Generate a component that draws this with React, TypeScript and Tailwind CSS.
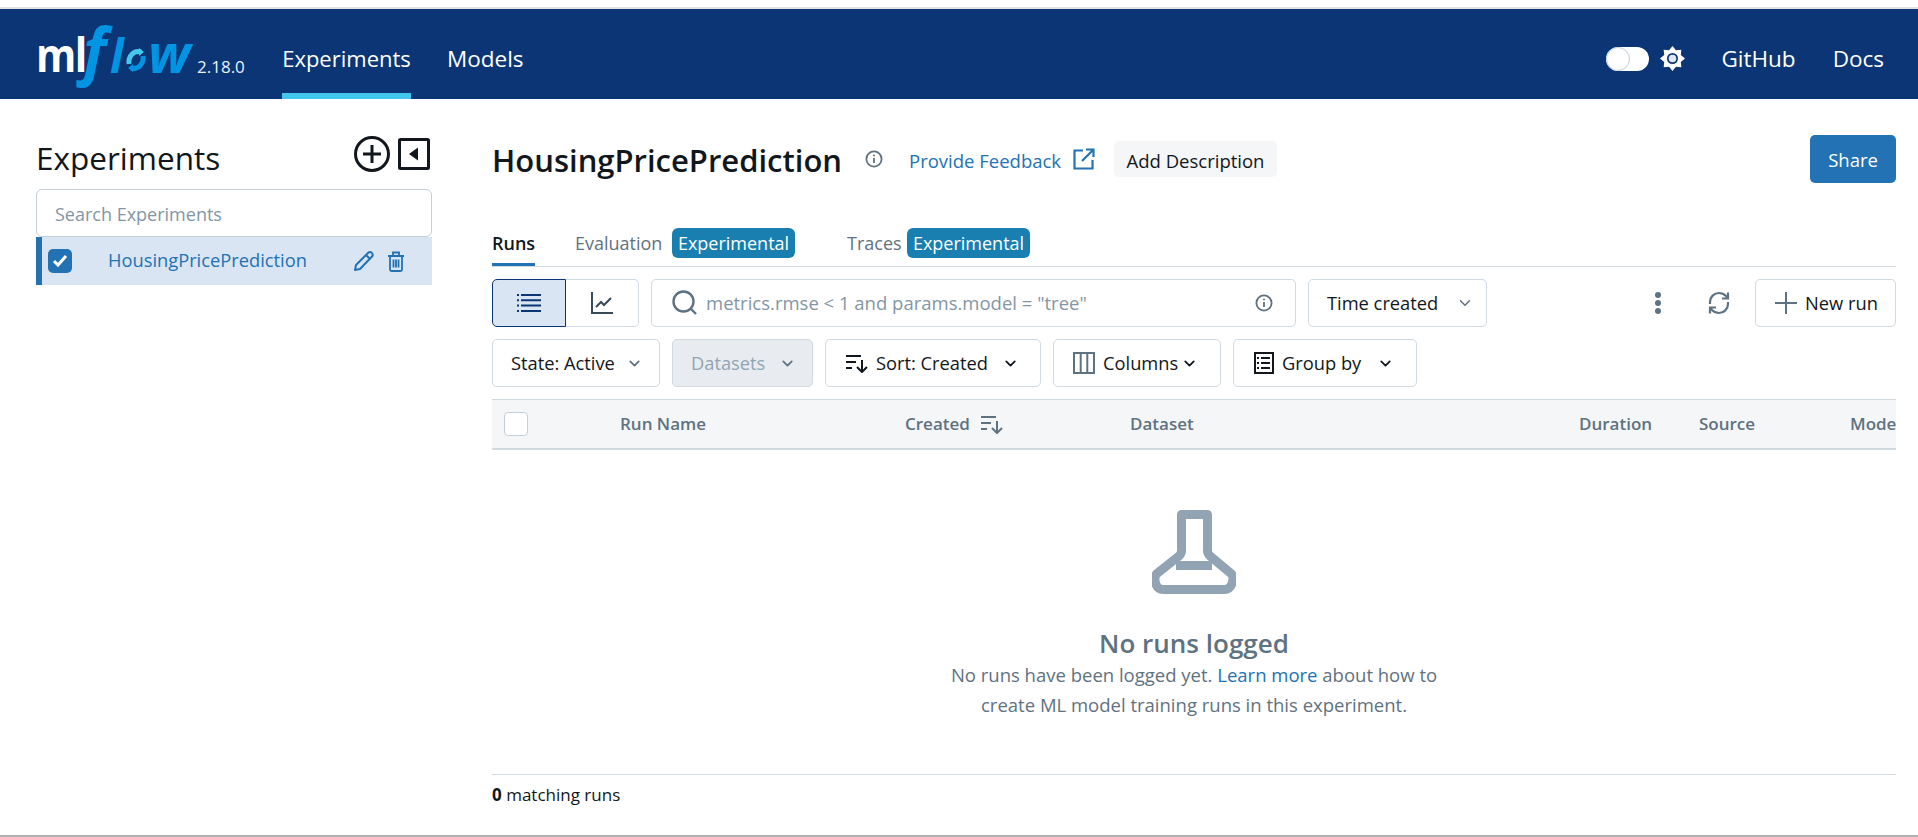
import React from "react";
import { ChevronDown } from "lucide-react";

const font = "[font-family:'Open_Sans','Noto_Sans',sans-serif]";

// 8 point star for the light theme icon
const starPoints = Array.from({ length: 16 }, (_, i) => {
  const r = i % 2 === 0 ? 12.5 : 9;
  const a = (i * Math.PI) / 8 - Math.PI / 2;
  return `${(12.5 + r * Math.cos(a)).toFixed(2)},${(12.5 + r * Math.sin(a)).toFixed(2)}`;
}).join(" ");

function Logo() {
  return (
    <div className="flex items-baseline w-[246px] h-[72px] leading-none [font-family:'Open_Sans',sans-serif]">
      <span className="inline-block text-[41px] font-bold text-white tracking-[-1.5px] origin-bottom scale-y-[1.15] w-[47px]">ml</span>
      <span className="text-[62px] italic font-bold text-[#0194e2] w-[27px]">f</span>
      <span className="text-[46px] italic font-bold text-[#0194e2] w-[14px]">l</span>
      <svg className="mx-[1px]" width="22" height="26" viewBox="0 0 22 26" fill="none" strokeWidth="5">
        <path d="M4 17C3 9 9 3 16 5" stroke="#43c9ed" />
        <path d="M18 9c1 8-5 14-12 12" stroke="#0194e2" />
        <path d="M14 1l5 4-5 4z" fill="#43c9ed" />
        <path d="M8 17l-5 4 5 4z" fill="#0194e2" />
      </svg>
      <span className="text-[54px] italic font-bold text-[#0194e2] tracking-[-1px] w-[49px]">w</span>
      <span className="text-[17px] text-[#e8f1fa] font-normal">2.18.0</span>
    </div>
  );
}

function Sun() {
  return (
    <svg width="25" height="25" viewBox="0 0 25 25">
      <polygon points={starPoints} fill="#fff" />
      <circle cx="12.5" cy="12.5" r="5.5" fill="#0b3574" />
      <circle cx="12.5" cy="12.5" r="3.8" fill="#dfe8f2" />
    </svg>
  );
}

function Flask() {
  return (
    <svg width="84" height="84" viewBox="0 0 84 84" fill="none" stroke="#92a4b4" strokeWidth="9" strokeLinejoin="round">
      <path d="M29.5 4.500h26V41c0 2 1 3.500 2.500 5l21 17.500c4 4 1.500 16-6.500 16H11c-8 0-10-12-6-16L27 46c1.500-1.500 2.500-3 2.500-5z" />
      <path d="M24 55.500h36" />
    </svg>
  );
}

function Info({ size = 18 }: { size?: number }) {
  return (
    <svg width={size} height={size} viewBox="0 0 18 18" fill="none" stroke="#5f7281" strokeWidth="1.800">
      <circle cx="9" cy="9" r="7.600" />
      <path d="M9 8v5" />
      <circle cx="9" cy="5.400" r="1" fill="#5f7281" stroke="none" />
    </svg>
  );
}

function SortIcon({ color = "#11171c" }: { color?: string }) {
  return (
    <svg className="shrink-0" width="24" height="20" viewBox="0 0 24 20" fill="none" stroke={color} strokeWidth="2">
      <path d="M1 3h15M1 9h10M1 15h6M17 7v12M12 14l5 5 5-5" />
    </svg>
  );
}

function Pill({
  className = "",
  children,
}: {
  className?: string;
  children: React.ReactNode;
}) {
  return (
    <div className={`h-12 flex items-center rounded-[5px] border border-[#d1d9e1] text-[18.3px] text-[#11171c] shrink-0 ${className}`}>
      {children}
    </div>
  );
}

function Badge() {
  return (
    <span className="h-[30px] w-[123px] flex items-center justify-center rounded-[6px] bg-[#187fb0] text-white text-[18px]">
      Experimental
    </span>
  );
}

export default function App() {
  return (
    <div className={`h-screen w-full flex flex-col overflow-hidden bg-white ${font}`}>
      <div className="h-[7px] shrink-0" />
      <div className="h-[2px] bg-[#e2e2e2] shrink-0" />

      {/* Top nav */}
      <header className="h-[90px] shrink-0 bg-[#0b3574] flex items-center pl-[36px] pr-[34px] text-white">
        <Logo />
        <div className="self-stretch w-[129px] border-b-[6px] border-[#42c6ee] flex items-end justify-center text-[22px] leading-[30px] pb-[20px]">
          Experiments
        </div>
        <div className="ml-[36px] text-[22.5px] leading-[30px] mt-[9px]">Models</div>
        <div className="ml-auto flex items-center mt-[9px]">
          <div className="w-[43px] h-[24px] rounded-full bg-white flex items-center">
            <div className="w-[24px] h-[24px] rounded-full bg-white border border-[#c0cdd8]" />
          </div>
          <div className="ml-[11px] mr-[36px]">
            <Sun />
          </div>
          <span className="text-[22.5px]">GitHub</span>
          <span className="text-[22.5px] ml-[37px]">Docs</span>
        </div>
      </header>

      <div className="flex-1 flex min-h-0">
        {/* Sidebar */}
        <aside className="w-[396px] ml-[36px] shrink-0 pt-[37px]">
          <div className="h-[53px] flex items-start justify-between pr-[2px]">
            <h1 className="text-[31.500px] font-medium text-[#11171c] leading-[44px]">Experiments</h1>
            <div className="flex items-center gap-[8px]">
              <svg width="36" height="36" viewBox="0 0 36 36" fill="none" stroke="#11171c" strokeWidth="3">
                <circle cx="18" cy="18" r="16.500" />
                <path d="M18 9v18M9 18h18" />
              </svg>
              <svg width="32" height="32" viewBox="0 0 32 32">
                <rect x="1.500" y="1.500" width="29" height="29" rx="1" fill="none" stroke="#11171c" strokeWidth="3" />
                <path d="M20 9.500v13L11 16z" fill="#11171c" />
              </svg>
            </div>
          </div>
          <div className="h-[48px] rounded-[6px] border border-[#c4cfd9] flex items-center pl-[18px] pt-[2px] text-[18px] text-[#8396a5]">
            Search Experiments
          </div>
          <div className="h-[48px] bg-[#d9e5f2] border-l-[6px] border-[#2272b4] flex items-center pl-[6px]">
            <div className="w-6 h-6 rounded-[5px] bg-[#2272b4] flex items-center justify-center">
              <svg width="16" height="14" viewBox="0 0 16 14" fill="none" stroke="#fff" strokeWidth="3">
                <path d="M2 7l4 4 8-9" />
              </svg>
            </div>
            <span className="ml-[36px] text-[18.3px] text-[#2272b4] w-[245px] pb-[2px]">HousingPricePrediction</span>
            <svg width="22" height="22" viewBox="0 0 22 22" fill="none" stroke="#2272b4" strokeWidth="2" strokeLinejoin="round">
              <path d="M2 20l1-5L15 3c1.500-1.500 3-1.500 4 0s1 2.500 0 3.500L7 19zM13 5l4 4" />
            </svg>
            <svg className="ml-[13px]" width="16" height="21" viewBox="0 0 16 21" fill="none" stroke="#2272b4" strokeWidth="1.800">
              <path d="M0 5h16M5 5V1.500h6V5M2 5v13.500c0 1 .5 1.500 1.500 1.500h9c1 0 1.500-.5 1.500-1.500V5M5.500 8.500v8M8 8.500v8M10.500 8.500v8" />
            </svg>
          </div>
        </aside>

        {/* Main */}
        <main className="flex-1 min-w-0 ml-[60px] mr-[22px] pt-[36px] flex flex-col">
          <div className="h-12 shrink-0 flex items-center">
            <h2 className="text-[31px] font-semibold text-[#11171c] w-[373px] pt-[2px]">HousingPricePrediction</h2>
            <Info />
            <span className="ml-[26px] text-[18.500px] text-[#2272b4] w-[164px] whitespace-nowrap pt-[3px]">Provide Feedback</span>
            <svg width="22" height="22" viewBox="0 0 22 22" fill="none" stroke="#2272b4" strokeWidth="2.200">
              <path d="M10 2.500H1.500v18h18V12M13 1.500h7.500V9M20.500 1.500L9 13" />
            </svg>
            <div className="ml-[19px] h-[36px] w-[163px] rounded-[5px] bg-[#f5f6f8] flex items-center justify-center pt-[3px] text-[18.500px] text-[#11171c] whitespace-nowrap">
              Add Description
            </div>
            <div className="ml-auto w-[86px] h-12 rounded-[5px] bg-[#2272b4] text-white text-[18.500px] pt-[1px] flex items-center justify-center">
              Share
            </div>
          </div>

          {/* Tabs */}
          <div className="mt-[45px] h-[39px] shrink-0 border-b border-[#d1d9e1] flex items-start text-[18px] text-[#5f7281]">
            <div className="h-[38px] w-[43px] border-b-[3px] border-[#2272b4] text-[#11171c] font-semibold pt-[2px]">Runs</div>
            <span className="ml-[40px] pt-[2px] w-[97px] font-medium">Evaluation</span>
            <Badge />
            <span className="ml-[52px] pt-[2px] w-[60px] font-medium">Traces</span>
            <Badge />
          </div>

          {/* Search row */}
          <div className="mt-[12px] flex items-center shrink-0">
            <div className="w-[74px] h-12 rounded-l-[5px] border border-[#0b3574] bg-[#d9e5f2] flex items-center justify-center">
              <svg width="24" height="20" viewBox="0 0 24 20" fill="none" stroke="#0b3574" strokeWidth="2">
                <path d="M4 2h20M4 7.300h20M4 12.600h20M4 18h20M0 2h2M0 7.300h2M0 12.600h2M0 18h2" />
              </svg>
            </div>
            <div className="w-[73px] h-12 rounded-r-[5px] border border-l-0 border-[#d1d9e1] flex items-center justify-center">
              <svg width="22" height="22" viewBox="0 0 22 22" fill="none" stroke="#3a4a58" strokeWidth="2">
                <path d="M1 0v21h21M5 15l5-5 3 3 7-7" />
              </svg>
            </div>
            <Pill className="ml-[12px] w-[645px] pl-[20px] pr-[22px]">
              <svg className="shrink-0" width="26" height="26" viewBox="0 0 26 26" fill="none" stroke="#5f7281" strokeWidth="2.400">
                <circle cx="11.500" cy="11.500" r="10" />
                <path d="M18.500 18.500L24 24" />
              </svg>
              <span className="ml-[8px] text-[18.500px] text-[#8396a5] whitespace-nowrap">metrics.rmse &lt; 1 and params.model = "tree"</span>
              <span className="ml-auto flex">
                <Info />
              </span>
            </Pill>
            <Pill className="ml-[12px] w-[179px] pl-[18px]">
              <span>Time created</span>
              <ChevronDown className="ml-[18px] text-[#5f7281]" size={18} />
            </Pill>
            <div className="ml-auto flex flex-col gap-[2px] mr-[46px]">
              <span className="w-[6px] h-[6px] rounded-full bg-[#5f7281]" />
              <span className="w-[6px] h-[6px] rounded-full bg-[#5f7281]" />
              <span className="w-[6px] h-[6px] rounded-full bg-[#5f7281]" />
            </div>
            <svg className="mr-[24px]" width="24" height="24" viewBox="0 0 24 24" fill="none" stroke="#5f7281" strokeWidth="2.200">
              <path d="M3 13V11c0-5 4-9 9-9 3 0 5 1 7 3l2 2.500M21 1.500v6h-6M21 11v2c0 5-4 9-9 9-3 0-5-1-7-3l-2-2.500M3 22.500v-6h6" />
            </svg>
            <Pill className="w-[141px] pl-[19px]">
              <svg className="shrink-0" width="22" height="22" viewBox="0 0 22 22" fill="none" stroke="#5f7281" strokeWidth="2">
                <path d="M11 0v22M0 11h22" />
              </svg>
              <span className="ml-[8px]">New run</span>
            </Pill>
          </div>

          {/* Filters row */}
          <div className="mt-[12px] flex items-center gap-[12px] shrink-0">
            <Pill className="w-[168px] pl-[18px]">
              <span>State: Active</span>
              <ChevronDown className="ml-[11px] text-[#5f7281]" size={17} strokeWidth={2.500} />
            </Pill>
            <Pill className="w-[141px] pl-[18px] bg-[#e8ecf0]">
              <span className="text-[#92a4b4]">Datasets</span>
              <ChevronDown className="ml-[14px] text-[#5f7281]" size={17} strokeWidth={2.500} />
            </Pill>
            <Pill className="w-[216px] pl-[19px]">
              <SortIcon />
              <span className="ml-[7px]">Sort: Created</span>
              <ChevronDown className="ml-[14px]" size={17} strokeWidth={2.500} />
            </Pill>
            <Pill className="w-[168px] pl-[19px]">
              <svg className="shrink-0" width="22" height="22" viewBox="0 0 22 22" fill="none" stroke="#5f7281" strokeWidth="2">
                <path d="M1 1h20v20H1zM7.700 1v20M14.300 1v20" />
              </svg>
              <span className="ml-[8px]">Columns</span>
              <ChevronDown className="ml-[3px]" size={17} strokeWidth={2.500} />
            </Pill>
            <Pill className="w-[184px] pl-[20px]">
              <svg className="shrink-0" width="20" height="22" viewBox="0 0 20 22" fill="none" stroke="#11171c" strokeWidth="2">
                <path d="M1 1h18v20H1zM7 6h9M7 11h9M7 16h9M3 6h2M3 11h2M3 16h2" />
              </svg>
              <span className="ml-[8px]">Group by</span>
              <ChevronDown className="ml-[16px]" size={17} strokeWidth={2.500} />
            </Pill>
          </div>

          {/* Table head */}
          <div className="mt-[12px] h-[51px] shrink-0 bg-[#f5f6f8] border-t border-[#d1d9e1] border-b-2 border-b-[#d1d9e1] flex items-center text-[17px] font-semibold text-[#5f7281] overflow-hidden whitespace-nowrap">
            <div className="ml-[12px] w-6 h-6 rounded-[4px] border border-[#c4cfd9] bg-white shrink-0" />
            <span className="ml-[92px] w-[285px] shrink-0">Run Name</span>
            <span className="w-[75px] shrink-0">Created</span>
            <SortIcon color="#5f7281" />
            <span className="ml-[126px] w-[449px] shrink-0">Dataset</span>
            <span className="w-[120px] shrink-0">Duration</span>
            <span className="w-[151px] shrink-0">Source</span>
            <span className="shrink-0">Models</span>
          </div>

          {/* Empty state */}
          <div className="flex-1 min-h-0 flex flex-col items-center pt-[60px]">
            <Flask />
            <h3 className="mt-[32px] text-[26px] font-semibold text-[#5f7281] leading-[34px]">No runs logged</h3>
            <p className="text-[18.500px] leading-[30px] text-[#5f7281] text-center w-[540px]">
              No runs have been logged yet. <span className="text-[#2272b4]">Learn more</span> about how to
              <br />
              create ML model training runs in this experiment.
            </p>
          </div>

          <div className="h-[61px] shrink-0 border-t border-[#d1d9e1] pt-[7px] text-[17px] text-[#11171c]">
            <span className="font-bold">0</span> matching runs
          </div>
        </main>
      </div>
      <div className="h-[2px] bg-[#b0b0b0] shrink-0" />
    </div>
  );
}
